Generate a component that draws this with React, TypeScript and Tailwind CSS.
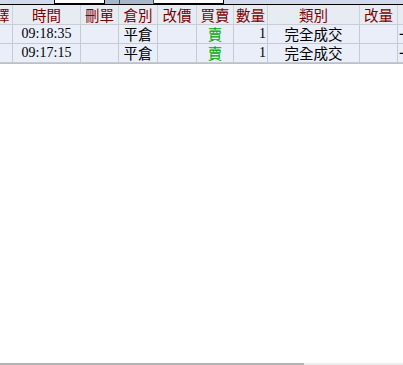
import React from "react";

const widths = [35, 68, 38, 39, 39, 37, 34, 92, 38, 43];
const headers = ["選擇", "時間", "刪單", "倉別", "改價", "買賣", "數量", "類別", "改量", ""];

const rows = [
  ["", "09:18:35", "", "平倉", "", "賣", "1", "完全成交", "", "一"],
  ["", "09:17:15", "", "平倉", "", "賣", "1", "完全成交", "", "一"],
];

const cjk = '"Noto Sans CJK TC", "Noto Sans CJK SC", sans-serif';
const serif = '"Liberation Serif", "Noto Sans CJK TC", serif';

export default function App() {
  return (
    <div className="w-[403px] h-[365px] bg-white flex flex-col overflow-hidden">
      {/* toolbar remnant */}
      <div className="h-[4px] bg-[#cfdbec] flex shrink-0">
        <div className="w-[54px]" />
        <div className="w-[51px] bg-white border-x border-b border-black" />
        <div className="w-[15px] bg-[#a7b5c9] border-r border-[#404850]" />
        <div className="w-[34px] bg-[#a7b5c9] border-r border-[#404850]" />
        <div className="w-[70px] bg-white border-r border-b border-black" />
      </div>
      <div className="h-[1px] bg-black shrink-0" />
      <div className="overflow-hidden shrink-0">
        <div className="ml-[-22px] w-max">
          {/* header */}
          <div className="flex h-[20px] bg-[#e7ebf2] border-b border-[#c9cdd4]">
            {headers.map((h, i) => (
              <div
                key={i}
                style={{ width: widths[i], fontFamily: cjk }}
                className="flex items-center justify-center border-r border-[#cfd2d8] text-[14.5px] leading-[18px] text-[#7d0000] whitespace-nowrap"
              >
                {h}
              </div>
            ))}
          </div>
          {rows.map((r, ri) => (
            <div
              key={ri}
              className="flex h-[19px] bg-[#e9eef9] border-b border-[#c6cad2]"
            >
              {r.map((c, i) => {
                const isNum = i === 1 || i === 6;
                const align =
                  i === 6 ? "justify-end pr-[1px]" : i === 9 ? "justify-start pl-[1px]" : "justify-center";
                const color = i === 5 ? "text-[#00aa00]" : "text-black";
                return (
                  <div
                    key={i}
                    style={{ width: widths[i], fontFamily: isNum ? serif : cjk }}
                    className={`flex items-center ${align} ${color} border-r border-[#c6cad2] leading-[18px] whitespace-nowrap ${
                      isNum ? "text-[14px]" : "text-[14.5px]"
                    }`}
                  >
                    {c}
                  </div>
                );
              })}
            </div>
          ))}
          <div className="h-[1px] bg-[#c0c0c0]" />
        </div>
      </div>
      <div className="flex-1" />
      <div className="h-[2px] flex shrink-0">
        <div className="w-[304px] bg-[#b4b4b4]" />
        <div className="flex-1 bg-[#ececec]" />
      </div>
    </div>
  );
}
